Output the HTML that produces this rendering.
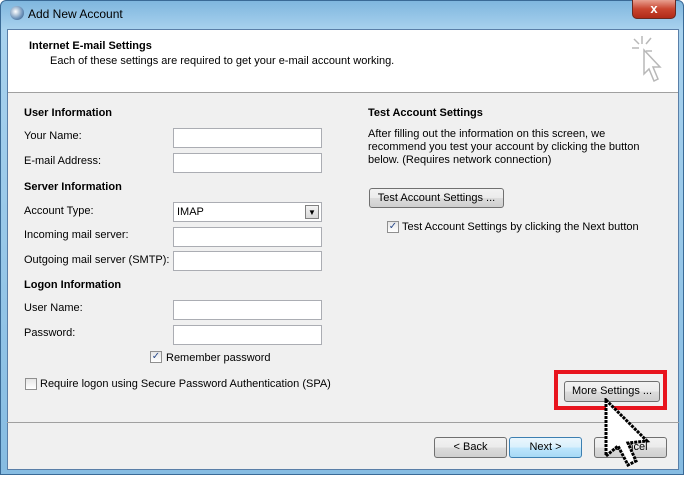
<!DOCTYPE html>
<html><head><style>
body{margin:0;width:692px;height:492px;background:#fff;position:relative;overflow:hidden;font-family:"Liberation Sans",sans-serif;font-size:11px;color:#000}
.a{position:absolute}
.win{left:0;top:0;width:684px;height:475px;background:linear-gradient(180deg,#7fb6de 0%,#a8d2ee 6%,#86bce2 100%);border:1px solid #3a6a96;box-sizing:border-box;border-radius:6px 6px 0 0}
.client{left:7px;top:29px;width:672px;height:441px;background:#f0f0f0;border:1px solid #5a7fa8;box-sizing:border-box}
.hdr{left:8px;top:30px;width:670px;height:62px;background:#fff;border-bottom:1px solid #a0a0a0}
.in{position:absolute;background:#fff;border:1px solid #abadb3;box-sizing:border-box;width:149px;height:20px;left:173px}
.b{font-weight:bold}
.btn{position:absolute;border:1px solid #707070;border-radius:3px;background:linear-gradient(#f2f2f2,#ebebeb 50%,#dcdcdc 51%,#cfcfcf);box-sizing:border-box;text-align:center;font-size:11px;line-height:19px}
.cb{position:absolute;width:12px;height:12px;border:1px solid #8f8f8f;background:linear-gradient(#e6e6e6,#fff);box-sizing:border-box;font-size:10px;line-height:10px;text-align:center;color:#2a4a8a}
</style></head><body>
<div class="a win"></div>
<div class="a" style="left:10px;top:6px;width:14px;height:14px;border-radius:50%;background:radial-gradient(circle at 40% 40%,#fff,#6a90b8 60%,#2a4a70)"></div>
<div class="a" style="left:28px;top:7px;font-size:12px;color:#000">Add New Account</div>
<div class="a" style="left:632px;top:0;width:44px;height:19px;background:linear-gradient(#e8a090,#c9452f 50%,#b02a18);border:1px solid #6a2a20;border-top:none;border-radius:0 0 5px 5px;box-sizing:border-box;color:#fff;font-weight:bold;text-align:center;font-size:13px;line-height:17px">x</div>
<div class="a client"></div>
<div class="a hdr"></div>
<div class="a b" style="left:29px;top:40px">Internet E-mail Settings</div>
<div class="a" style="left:50px;top:55px">Each of these settings are required to get your e-mail account working.</div>
<svg class="a" style="left:628px;top:34px" width="40" height="50" viewBox="0 0 40 50"><g stroke="#b8b8b8" stroke-width="1.5" fill="none"><line x1="14" y1="2" x2="14" y2="10"/><line x1="4" y1="14" x2="11" y2="14"/><line x1="6" y1="5" x2="11" y2="10"/><line x1="23" y1="4" x2="18" y2="10"/><line x1="18" y1="17" x2="24" y2="17"/><path d="M16 16 L16 40 L21 35 L26 47 L30 45 L25 33 L32 33 Z" fill="#fff"/></g></svg>

<div class="a b" style="left:24px;top:107px">User Information</div>
<div class="a" style="left:24px;top:130px">Your Name:</div><div class="in" style="top:128px"></div>
<div class="a" style="left:24px;top:155px">E-mail Address:</div><div class="in" style="top:153px"></div>
<div class="a b" style="left:24px;top:181px">Server Information</div>
<div class="a" style="left:24px;top:205px">Account Type:</div>
<div class="in" style="top:202px"><span style="position:absolute;left:3px;top:3px">IMAP</span><div style="position:absolute;right:2px;top:2px;width:14px;height:14px;border:1px solid #808080;box-sizing:border-box;background:linear-gradient(#f4f4f4,#d8d8d8);font-size:8px;text-align:center;line-height:13px">▼</div></div>
<div class="a" style="left:24px;top:229px">Incoming mail server:</div><div class="in" style="top:227px"></div>
<div class="a" style="left:24px;top:254px">Outgoing mail server (SMTP):</div><div class="in" style="top:251px"></div>
<div class="a b" style="left:24px;top:279px">Logon Information</div>
<div class="a" style="left:24px;top:302px">User Name:</div><div class="in" style="top:300px"></div>
<div class="a" style="left:24px;top:327px">Password:</div><div class="in" style="top:325px"></div>
<div class="cb" style="left:150px;top:351px">✓</div><div class="a" style="left:166px;top:352px">Remember password</div>
<div class="cb" style="left:25px;top:378px"></div><div class="a" style="left:40px;top:378px">Require logon using Secure Password Authentication (SPA)</div>

<div class="a b" style="left:368px;top:107px">Test Account Settings</div>
<div class="a" style="left:368px;top:128px;line-height:13px;width:300px">After filling out the information on this screen, we<br>recommend you test your account by clicking the button<br>below. (Requires network connection)</div>
<div class="btn" style="left:369px;top:188px;width:135px;height:20px">Test Account Settings ...</div>
<div class="cb" style="left:387px;top:221px">✓</div><div class="a" style="left:402px;top:221px">Test Account Settings by clicking the Next button</div>

<div class="a" style="left:7px;top:422px;width:672px;height:1px;background:#a0a0a0"></div>
<div class="a" style="left:554px;top:370px;width:113px;height:40px;border:4px solid #e8141e;box-sizing:border-box"></div>
<div class="btn" style="left:564px;top:381px;width:96px;height:21px">More Settings ...</div>
<div class="btn" style="left:434px;top:437px;width:73px;height:21px">&lt; Back</div>
<div class="btn" style="left:509px;top:437px;width:73px;height:21px;border-color:#3c7fb1;background:linear-gradient(#eaf6fd,#d9f0fc 50%,#bee6fd 51%,#a7d9f5)">Next &gt;</div>
<div class="btn" style="left:594px;top:437px;width:73px;height:21px">Cancel</div>
<svg class="a" style="left:602px;top:398px" width="52" height="72" viewBox="0 0 52 72"><path d="M4 2 L4 58 L16 48 L26 67 L34 63 L26 45 L45 43 Z" fill="#fff" stroke="#000" stroke-width="3" stroke-dasharray="3 1"/></svg>
</body></html>
